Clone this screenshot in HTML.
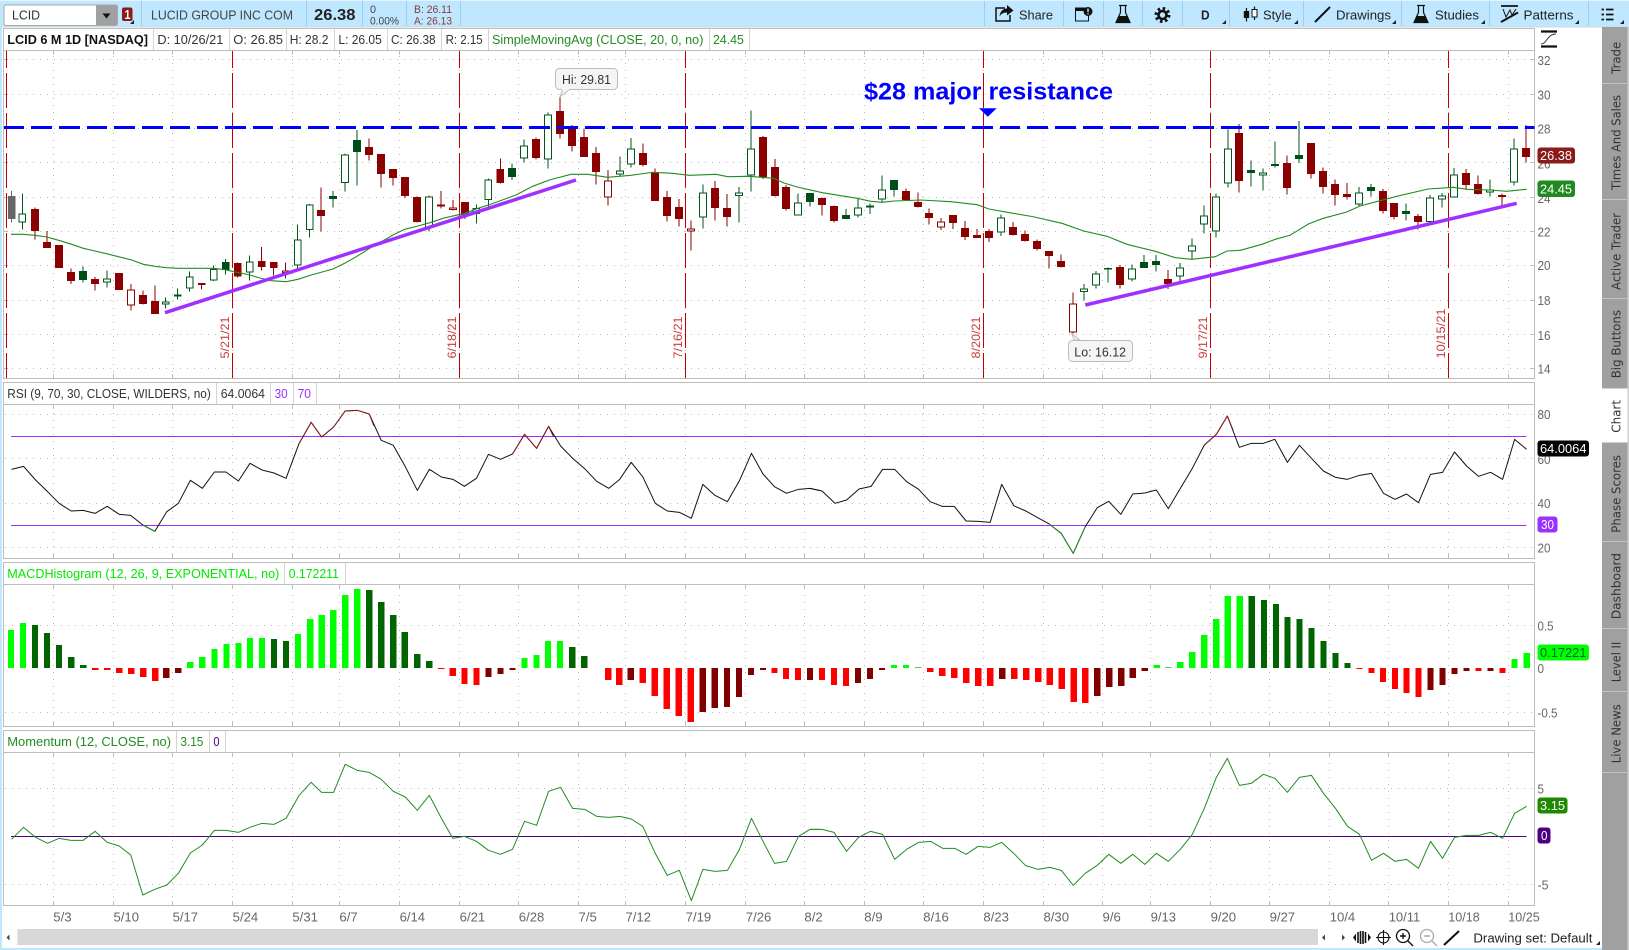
<!DOCTYPE html>
<html lang="en"><head><meta charset="utf-8"><title>LCID Chart</title>
<style>
html,body{margin:0;padding:0;background:#fff;overflow:hidden}
svg{display:block}
text{font-family:"Liberation Sans",sans-serif;font-size:13px;fill:#333}
.ax{fill:#666}
.sb{font-family:"DejaVu Sans",sans-serif;font-size:12px;fill:#333}
.wr{stroke:#8b0000;stroke-width:3;fill:none}
.wg{stroke:#00561b;stroke-width:3;fill:none}
.br{fill:#8b0000;stroke:#8b0000;stroke-width:3}
.bh{fill:#fff;stroke:#8b0000;stroke-width:3}
.bg{fill:#004d1a;stroke:#004d1a;stroke-width:3}
.bw{fill:#fff;stroke:#00561b;stroke-width:3}
.c{shape-rendering:crispEdges}
.ln{fill:none;vector-effect:non-scaling-stroke;stroke-width:1;stroke-linejoin:round}
</style></head><body>
<svg xmlns="http://www.w3.org/2000/svg" width="1629" height="950" viewBox="0 0 1629 950">
<defs>
<path id="vt" d="M53.5 0V950M113.5 0V950M172.5 0V950M232.5 0V950M292.5 0V950M339.5 0V950M399.5 0V950M459.5 0V950M518.5 0V950M578.5 0V950M625.5 0V950M685.5 0V950M745.5 0V950M804.5 0V950M864.5 0V950M923.5 0V950M983.5 0V950M1043.5 0V950M1102.5 0V950M1150.5 0V950M1210.5 0V950M1269.5 0V950M1329.5 0V950M1388.5 0V950M1448.5 0V950M1508.5 0V950"/>
<clipPath id="pg"><rect x="0" y="51" width="1629" height="327"/><rect x="0" y="405" width="1629" height="153"/><rect x="0" y="585" width="1629" height="141"/><rect x="0" y="753" width="1629" height="152"/></clipPath>
<clipPath id="st"><rect x="0" y="51" width="1629" height="4"/><rect x="0" y="374" width="1629" height="4"/><rect x="0" y="405" width="1629" height="4"/><rect x="0" y="554" width="1629" height="4"/><rect x="0" y="585" width="1629" height="4"/><rect x="0" y="722" width="1629" height="4"/><rect x="0" y="753" width="1629" height="4"/><rect x="0" y="901" width="1629" height="4"/></clipPath>
</defs>
<rect width="1629" height="950" fill="#fff"/>
<!-- outer strips -->
<rect x="0" y="27" width="2" height="923" fill="#bfe7ff"/>
<rect x="0" y="948" width="1602" height="2" fill="#bfe7ff"/>
<!-- toolbar -->
<rect width="1629" height="27" fill="#bfe7ff"/>
<rect width="1629" height="1" fill="#e4f5ff"/>
<rect x="0" y="26.5" width="1629" height="1" fill="#cfd8dd"/>
<g class="c" stroke="#9ecfea" stroke-width="1">
<path d="M141.5 1V26M306.5 1V26M362.5 1V26M406.5 1V26M460.5 1V26M984.5 1V26M1063.5 1V26M1103.5 1V26M1142.5 1V26M1182.5 1V26M1229.5 1V26M1303.5 1V26M1401.5 1V26M1489.5 1V26M1588.5 1V26"/>
</g>
<rect x="4" y="5" width="113.5" height="20.5" rx="2" fill="#fff" stroke="#a8a8a8"/>
<rect x="96" y="5.5" width="21" height="19.5" fill="#a0a0a0"/>
<path d="M102.5 13.5h8l-4 5z" fill="#111"/>
<text x="12" y="19.5" textLength="28" lengthAdjust="spacingAndGlyphs">LCID</text>
<rect x="122" y="7.5" width="10.5" height="13.5" rx="2" fill="#8b1a1a"/>
<text x="124.5" y="19" style="font-weight:bold;fill:#fff" textLength="6" lengthAdjust="spacingAndGlyphs">1</text>
<path d="M134 20v4h-4z" fill="#222"/>
<text x="151" y="19.5" style="fill:#444" textLength="142" lengthAdjust="spacingAndGlyphs">LUCID GROUP INC COM</text>
<text x="314" y="20" style="font-weight:bold;font-size:16px;fill:#222" textLength="41.5" lengthAdjust="spacingAndGlyphs">26.38</text>
<text x="370" y="13" style="font-size:11px;fill:#444" textLength="6" lengthAdjust="spacingAndGlyphs">0</text>
<text x="370" y="24.5" style="font-size:11px;fill:#444" textLength="29" lengthAdjust="spacingAndGlyphs">0.00%</text>
<text x="414" y="13" style="font-size:11px;fill:#8b3a3a" textLength="38" lengthAdjust="spacingAndGlyphs">B: 26.11</text>
<text x="414" y="24.5" style="font-size:11px;fill:#8b3a3a" textLength="38" lengthAdjust="spacingAndGlyphs">A: 26.13</text>
<!-- toolbar right -->
<path d="M1005 8H996V21H1010V15" fill="none" stroke="#111" stroke-width="1.5"/>
<path d="M1007 5L1013.5 10.5L1007 15.5V12.5C1003 12.5 1001 14 999.5 16.5C1000 11.5 1003 8.5 1007 8.5Z" fill="#111"/>
<text x="1019" y="19.5" style="fill:#222" textLength="34" lengthAdjust="spacingAndGlyphs">Share</text>
<rect x="1075.5" y="8" width="13" height="13" fill="none" stroke="#111"/><rect x="1075.5" y="8" width="10" height="3" fill="#111"/>
<circle cx="1088" cy="11.5" r="4.5" fill="#111"/><path d="M1088 8.5v3.6M1088 13.2v1.2" stroke="#fff" stroke-width="1.2"/>
<g id="fl"><path d="M1119 5.5h8M1120.5 6v6.5L1116 22.5h14L1125.5 12.5V6" fill="none" stroke="#111" stroke-width="1.2"/><path d="M1118.5 16h9l3 6.5h-15z" fill="#111"/></g>
<circle cx="1162.5" cy="15" r="4" fill="none" stroke="#111" stroke-width="2.6"/><circle cx="1162.5" cy="15" r="6.5" fill="none" stroke="#111" stroke-width="3" stroke-dasharray="2.5 2.6"/>
<text x="1201" y="19.5" style="font-weight:bold;fill:#222" textLength="8.6" lengthAdjust="spacingAndGlyphs">D</text>
<path d="M1226 20v4h-4zM1298 20v4h-4zM1396 20v4h-4zM1485 20v4h-4zM1579 20v4h-4zM1624 20v4h-4z" fill="#222"/>
<path d="M1246.5 8V21.5M1254.5 6.5V20" stroke="#111" stroke-width="1.2"/><rect x="1243.8" y="11" width="5.4" height="7" fill="#111"/><rect x="1252" y="9.5" width="5" height="7.5" fill="#fff" stroke="#111"/>
<text x="1263" y="19.5" style="fill:#222" textLength="28.6" lengthAdjust="spacingAndGlyphs">Style</text>
<path d="M1315 22L1330 7" stroke="#111" stroke-width="2"/>
<text x="1336" y="19.5" style="fill:#222" textLength="55" lengthAdjust="spacingAndGlyphs">Drawings</text>
<use href="#fl" x="298"/>
<text x="1435" y="19.5" style="fill:#222" textLength="44" lengthAdjust="spacingAndGlyphs">Studies</text>
<path d="M1501 6H1518" stroke="#111" stroke-width="1.8"/><path d="M1503 9L1506 17L1510 10L1512 15L1516 9" fill="none" stroke="#111"/><path d="M1501 22L1518 12.5" stroke="#111" stroke-width="2"/>
<text x="1523.5" y="19.5" style="fill:#222" textLength="50" lengthAdjust="spacingAndGlyphs">Patterns</text>
<path d="M1601.5 9.5h2.5M1606 9.5h7.5M1601.5 14.5h2.5M1606 14.5h7.5M1601.5 19.5h2.5M1606 19.5h7.5" stroke="#111" stroke-width="1.8"/>

<!-- panels -->
<g class="c" fill="none" stroke="#bdbdbd">
<rect x="3.5" y="28.5" width="1531" height="350"/><path d="M3.5 50.5H1534.5"/>
<rect x="3.5" y="382.5" width="1531" height="176"/><path d="M3.5 404.5H1534.5"/>
<rect x="3.5" y="562.5" width="1531" height="164"/><path d="M3.5 584.5H1534.5"/>
<rect x="3.5" y="730.5" width="1531" height="175"/><path d="M3.5 752.5H1534.5"/>
<path stroke="#d4d4d4" d="M153.5 29V50M229.5 29V50M286.5 29V50M334.5 29V50M387.5 29V50M441.5 29V50M488.5 29V50M709.5 29V50M749.5 29V50M216.5 383V404M270.5 383V404M293.5 383V404M316.5 383V404M284.5 563V584M345.5 563V584M176.5 731V752M209.5 731V752M225.5 731V752"/>
</g>
<!-- grid -->
<g class="c" fill="none">
<use href="#vt" stroke="#bbb" stroke-dasharray="1 6" clip-path="url(#pg)"/>
<use href="#vt" stroke="#bdbdbd" clip-path="url(#st)"/>
<path stroke="#bbb" stroke-dasharray="1 6" d="M5 59.5H1534M5 94.5H1534M5 128.5H1534M5 162.5H1534M5 197.5H1534M5 231.5H1534M5 265.5H1534M5 300.5H1534M5 334.5H1534M5 368.5H1534M5 414.5H1534M5 458.5H1534M5 503.5H1534M5 547.5H1534M5 625.5H1534M5 712.5H1534M5 788.5H1534M5 884.5H1534"/>
<path stroke="#bdbdbd" d="M4 59.5h4M4 94.5h4M4 128.5h4M4 162.5h4M4 197.5h4M4 231.5h4M4 265.5h4M4 300.5h4M4 334.5h4M4 368.5h4M1530 59.5h4M1530 94.5h4M1530 128.5h4M1530 162.5h4M1530 197.5h4M1530 231.5h4M1530 265.5h4M1530 300.5h4M1530 334.5h4M1530 368.5h4"/>
<!-- red verticals -->
<path stroke="#c00000" stroke-dasharray="35 5" stroke-dashoffset="18" d="M6.5 51V378M232.5 51V378M459.5 51V378M685.5 51V378M983.5 51V378M1210.5 51V378M1448.5 51V378"/>
</g>
<!-- rotated date labels -->
<g style="font-size:12px">
<text transform="translate(229,358.5) rotate(-90)" style="font-size:12px;fill:#c83c3c" textLength="42" lengthAdjust="spacingAndGlyphs">5/21/21</text>
<text transform="translate(456,358.5) rotate(-90)" style="font-size:12px;fill:#c83c3c" textLength="42" lengthAdjust="spacingAndGlyphs">6/18/21</text>
<text transform="translate(682,358.5) rotate(-90)" style="font-size:12px;fill:#c83c3c" textLength="42" lengthAdjust="spacingAndGlyphs">7/16/21</text>
<text transform="translate(980,358.5) rotate(-90)" style="font-size:12px;fill:#c83c3c" textLength="42" lengthAdjust="spacingAndGlyphs">8/20/21</text>
<text transform="translate(1207,358.5) rotate(-90)" style="font-size:12px;fill:#c83c3c" textLength="42" lengthAdjust="spacingAndGlyphs">9/17/21</text>
<text transform="translate(1445,358.5) rotate(-90)" style="font-size:12px;fill:#c83c3c" textLength="50" lengthAdjust="spacingAndGlyphs">10/15/21</text>
</g>

<!-- candles -->
<g class="c" transform="translate(0,100) scale(.33333)">
<path d="M35 273V368" stroke="#666" stroke-width="3"/><path d="M25 290h20V355h-20z" fill="#666" stroke="#666" stroke-width="3"/>
<path class="wr" d="M105 322V418M141 393V444M213 505V552M285 531V572M393 552V632M429 571V613M465 556V642M605 549V569M713 488V532"/>
<path class="wg" d="M67 280V388M249 500V548M321 511V563M497 592V626M533 565V598M569 514V575M641 497V543M677 477V524M749 466V542"/>
<path class="br" d="M95 329h20V391h-20zM131 428h20V442h-20zM167 437h20V502h-20zM203 518h20V541h-20zM275 539h20V550h-20zM347 521h20V568h-20zM419 587h20V610h-20zM455 605h20V640h-20zM595 550h20V554h-20zM703 491h20V528h-20z"/>
<path class="bh" d="M383 570h20V615h-20z"/>
<path class="bg" d="M239 515h20V538h-20zM667 488h20V508h-20z"/>
<path class="bw" d="M57 342h20V366h-20zM311 537h20V546h-20zM487 606h20V612h-20zM523 585h20V588h-20zM559 531h20V564h-20zM631 509h20V540h-20zM739 486h20V516h-20z"/>
</g>
<g class="c" transform="translate(258,100) scale(.33333)">
<path class="wr" d="M11 441V512M47 486V527M83 487V535M189 262V395M333 115V181M369 162V263M405 207V257M441 231V294M477 290V368M549 273V326M585 300V332M621 306V357M727 175V250"/>
<path class="wg" d="M119 373V507M155 312V413M225 273V322M261 160V275M297 90V257M513 286V395M655 313V371M691 235V320M762 190V240"/>
<path class="br" d="M1 485h20V499h-20zM37 488h20V502h-20zM179 332h20V346h-20zM323 143h20V163h-20zM359 164h20V220h-20zM395 209h20V232h-20zM431 233h20V286h-20zM467 293h20V364h-20zM611 308h20V343h-20zM717 209h20V247h-20z"/>
<path class="bh" d="M73 513h20V518h-20zM539 315h20V318h-20zM575 324h20V329h-20z"/>
<path class="bg" d="M215 290h20V295h-20zM287 122h20V154h-20zM752 206h20V229h-20z"/>
<path class="bw" d="M109 420h20V495h-20zM145 315h20V389h-20zM251 165h20V248h-20zM503 291h20V383h-20zM645 325h20V341h-20zM681 240h20V299h-20z"/>
</g>
<g class="c" transform="translate(516,100) scale(.33333)">
<path class="wr" d="M60 113V178M132 -9V115M168 75V155M204 85V171M240 141V254M276 210V317M381 130V200M417 205V303M453 273V365M489 297V380M525 361V452M597 243V362M633 282V380M741 108V237"/>
<path class="wg" d="M24 118V188M96 38V206M312 169V228M345 114V203M561 253V385M669 261V368M705 31V275"/>
<path class="br" d="M50 119h20V172h-20zM122 35h20V100h-20zM158 89h20V136h-20zM194 113h20V169h-20zM230 161h20V214h-20zM371 161h20V193h-20zM407 221h20V301h-20zM443 293h20V346h-20zM479 323h20V355h-20zM587 266h20V322h-20zM623 326h20V349h-20zM731 113h20V229h-20z"/>
<path class="bh" d="M266 243h20V291h-20zM515 387h20V393h-20z"/>
<path class="bw" d="M14 138h20V174h-20zM86 45h20V177h-20zM302 213h20V222h-20zM335 147h20V192h-20zM551 279h20V351h-20zM659 279h20V287h-20zM695 147h20V225h-20z"/>
</g>
<g class="c" transform="translate(774,100) scale(.33333)">
<path class="wr" d="M3 177V290M36 255V332M144 293V347M180 316V368M396 265V303M432 277V323M465 325V374M501 354V390M537 345V387M573 363V420M609 387V414M645 387V426M717 366V407M753 391V425"/>
<path class="wg" d="M72 280V347M108 279V320M216 327V357M252 295V352M288 311V342M324 226V307M360 240V290M681 343V408"/>
<path class="br" d="M-7 203h20V286h-20zM26 263h20V325h-20zM134 296h20V313h-20zM170 320h20V361h-20zM386 275h20V298h-20zM422 308h20V319h-20zM455 341h20V352h-20zM527 347h20V367h-20zM563 386h20V409h-20zM599 407h20V412h-20zM635 395h20V412h-20zM707 383h20V403h-20zM743 404h20V421h-20z"/>
<path class="bh" d="M491 366h20V381h-20z"/>
<path class="bg" d="M98 281h20V304h-20zM206 347h20V355h-20zM350 242h20V268h-20z"/>
<path class="bw" d="M62 309h20V345h-20zM242 324h20V345h-20zM278 318h20V321h-20zM314 270h20V297h-20zM671 354h20V396h-20z"/>
</g>
<g class="c" transform="translate(1032,100) scale(.33333)">
<path class="wr" d="M15 418V452M51 453V506M87 463V503M123 577V700M264 495V566M408 510V567M621 72V278M765 166V284"/>
<path class="wg" d="M156 552V601M192 513V565M228 503V548M300 493V545M336 465V504M372 465V515M444 489V545M480 415V478M516 316V401M552 280V413M588 88V263M657 181V260M693 205V272M729 124V203"/>
<path class="br" d="M5 425h20V445h-20zM41 455h20V466h-20zM77 485h20V499h-20zM254 503h20V553h-20zM398 539h20V550h-20zM611 101h20V241h-20zM755 191h20V262h-20z"/>
<path class="bh" d="M113 612h20V696h-20z"/>
<path class="bg" d="M326 488h20V502h-20zM362 485h20V493h-20zM647 212h20V217h-20zM719 194h20V196h-20z"/>
<path class="bw" d="M146 567h20V575h-20zM182 522h20V555h-20zM218 505h20V507h-20zM290 507h20V537h-20zM434 504h20V528h-20zM470 438h20V453h-20zM506 348h20V372h-20zM542 291h20V393h-20zM578 147h20V249h-20zM683 219h20V225h-20z"/>
</g>
<g class="c" transform="translate(1290,100) scale(.33333)">
<path class="wr" d="M63 129V236M99 202V280M135 238V317M171 249V299M279 267V341M312 309V359M384 342V388M528 207V267M564 226V284M636 280V318M708 75V188"/>
<path class="wg" d="M27 63V189M207 261V320M243 252V290M348 310V362M420 285V369M456 279V323M492 204V293M600 238V290M672 115V257"/>
<path class="br" d="M53 131h20V220h-20zM89 215h20V259h-20zM125 254h20V283h-20zM161 284h20V289h-20zM269 275h20V331h-20zM302 311h20V349h-20zM374 350h20V364h-20zM518 221h20V253h-20zM554 254h20V280h-20zM626 287h20V289h-20zM698 146h20V169h-20z"/>
<path class="bg" d="M17 167h20V175h-20zM233 263h20V271h-20zM338 335h20V340h-20z"/>
<path class="bw" d="M197 279h20V312h-20zM410 294h20V365h-20zM446 288h20V297h-20zM482 225h20V291h-20zM590 270h20V276h-20zM662 147h20V246h-20z"/>
</g>

<!-- SMA -->
<polyline fill="none" stroke="#228b22" stroke-width="1.1" points="11,234.3 23.3,234.3 35,235.3 46.7,237 60,240.7 71.7,244.3 83.3,248.3 95,251 106.7,253.7 118.3,256.7 131.7,260 143.3,264.3 155,266.3 166.7,267.7 178.3,268.3 213.3,268.3 225,269.7 236.7,272.3 250,275 258,277.5 271.3,280.7 286.3,281.7 298,279.3 311.3,275 333,269 344.7,263.3 356.3,256.7 368,249.3 381.3,241.7 393,235 404.7,229.3 418,226 431.3,222.3 443,218.3 464.7,213.3 478,208.3 491.3,204 516,195 532.7,186.3 549.3,180 571,174.3 587.7,174.3 607.7,177.3 631,175.3 652.7,172.3 672.7,173.3 689.3,175.3 716,174.3 727.7,176.7 749.3,176.3 774,178.3 784,183 797.3,187 822.3,192.7 857.3,198.3 870.7,201.3 882.3,202.3 894,201 920.7,200 950.7,201.7 977.3,204.7 989,209 1007.3,212.3 1032,216.5 1062,223.3 1083.7,231 1107,236.3 1127,244.3 1155.3,251.3 1175.3,257.7 1192,259.3 1215.3,256.7 1227,251 1240.3,250.3 1262,244.3 1275.3,239.3 1290,235.3 1308.3,224 1323.3,218.3 1346.7,212 1360,206 1396.7,196.3 1428.3,189 1453.3,187.3 1466.7,189.3 1490,190 1506.7,191.3 1526.7,189.3"/>
<!-- purple trend -->
<path d="M165 312.7L576 180M1085.3 305L1516.7 203.3" stroke="#a030ff" stroke-width="3.5" fill="none"/>
<!-- blue dashed -->
<path class="c" d="M4 127.5H1534.5" stroke="#0000ff" stroke-width="3" stroke-dasharray="20 7 21 7 21 7" />
<path d="M979 108.3H996.7L987.8 116.7Z" fill="#0000ff"/>
<text x="864" y="99.5" style="font-weight:bold;font-size:24px;fill:#0000ff" textLength="249" lengthAdjust="spacingAndGlyphs">$28 major resistance</text>
<!-- callouts -->
<path d="M563 89L560 97L570 89" fill="#f5f5f5" stroke="#bbb"/>
<rect x="555.5" y="68.5" width="62" height="21" rx="4" fill="#f5f5f5" stroke="#bbb"/>
<rect x="562" y="87" width="7" height="3" fill="#f5f5f5"/>
<text x="562" y="84" textLength="49" lengthAdjust="spacingAndGlyphs">Hi: 29.81</text>
<path d="M1072 334L1080 340H1074Z" fill="#f5f5f5" stroke="#bbb"/>
<rect x="1068.5" y="340.5" width="64" height="21" rx="4" fill="#f5f5f5" stroke="#bbb"/>
<text x="1074.3" y="356.5" textLength="51.7" lengthAdjust="spacingAndGlyphs">Lo: 16.12</text>

<!-- RSI -->
<path class="c" d="M11 436.5H1526.5M11 525.5H1526.5" stroke="#9b30ff" fill="none"/>
<g transform="translate(0,240) scale(.52296,.33333)">
<polyline class="ln" stroke="#111" points="22,688 45,679 68,720 91,755 113,790 136,813 159,811 182,820 205,799 228,823 250,826 273,855 296,874 319,815 341,790 364,721 387,745 410,696 432,696 456,723 478,670 501,690 524,699 547,715 572,610 595,547 615,591 638,561 660,513 683,511 706,522 729,601 752,616 775,680 798,751 821,688 844,711 866,718 888,739 911,715 934,643 957,658 980,642 1003,583 1026,625 1049,559 1072,618 1095,655 1118,686 1141,724 1164,745 1185,718 1207,667 1229,710 1253,790 1276,813 1299,817 1322,835 1344,733 1367,766 1391,785 1414,722 1437,640 1459,702 1481,740 1504,760 1527,748 1549,745 1568,752"/>
<polyline class="ln" stroke="#8b1a1a" points="572,610 595,547 615,591 638,561 660,513 683,511 706,522 715,558"/>
<polyline class="ln" stroke="#8b1a1a" points="980,642 1003,583 1026,625 1049,559 1058,589"/>
<polyline class="ln" stroke="#228b22" points="273,855 296,874"/>
</g>
<g transform="translate(810,240) scale(.52232,.33333)">
<polyline class="ln" stroke="#111" points="0,745 23,753 48,790 70,780 94,747 117,739 139,688 162,688 185,725 208,748 230,785 253,799 276,799 299,843 322,844 345,847 367,733 390,797 413,813 436,833 458,852 481,880 504,940 527,860 550,803 572,784 595,823 618,762 641,759 663,750 686,806 709,745 732,685 755,615 778,583 799,528 822,622 845,610 868,610 890,598 914,667 937,616 960,655 983,693 1006,712 1029,718 1052,706 1075,700 1098,760 1120,778 1142,762 1165,788 1188,703 1211,697 1234,636 1257,678 1280,709 1303,697 1326,718 1349,598 1372,628"/>
<polyline class="ln" stroke="#8b1a1a" points="755,615 778,583 799,528 810,570"/>
<polyline class="ln" stroke="#228b22" points="458,852 481,880 504,940 527,860"/>
</g>

<!-- MACD bars -->
<g class="c" fill="none" stroke-width="12" transform="translate(0,560) scale(.52296,.33333)">
<path stroke="#00ff00" d="M21 324V210M44 324V189M364 324V306M387 324V291M410 324V267M433 324V252M456 324V249M478 324V234M501 324V234M570 324V222M593 324V177M615 324V165M637 324V150M660 324V105M683 324V87M1003 324V294M1026 324V285M1048 324V243M1071 324V243"/>
<path stroke="#006400" d="M67 324V195M90 324V219M113 324V255M136 324V291M159 324V315M524 324V237M547 324V243M706 324V90M729 324V126M752 324V165M774 324V216M798 324V282M821 324V303M1094 324V261M1117 324V288"/>
<path stroke="#ff0000" d="M182 324V330M205 324V330M228 324V339M251 324V342M274 324V351M297 324V363M844 324V327M866 324V348M888 324V372M911 324V375M1163 324V360M1184 324V375M1229 324V369M1252 324V408M1275 324V447M1298 324V468M1321 324V486M1481 324V339M1503 324V357M1526 324V360"/>
<path stroke="#800000" d="M318 324V354M341 324V339M934 324V351M957 324V342M980 324V330M1206 324V360M1344 324V456M1367 324V444M1390 324V441M1413 324V411M1436 324V345M1459 324V330M1549 324V360"/>
</g>
<g class="c" fill="none" stroke-width="12" transform="translate(810,560) scale(.52232,.33333)">
<path stroke="#00ff00" d="M161 324V315M184 324V315M664 324V315M709 324V306M732 324V276M755 324V225M778 324V177M800 324V108M823 324V108M1349 324V297M1372 324V279"/>
<path stroke="#006400" d="M207 324V322M686 324V322M846 324V108M869 324V120M892 324V132M914 324V171M937 324V177M960 324V204M983 324V243M1006 324V279M1029 324V309"/>
<path stroke="#ff0000" d="M23 324V360M46 324V375M69 324V378M230 324V336M253 324V348M276 324V354M299 324V369M322 324V378M345 324V378M391 324V357M414 324V360M437 324V366M459 324V375M482 324V387M505 324V426M527 324V429M1052 324V327M1075 324V339M1097 324V366M1120 324V387M1142 324V399M1165 324V411M1280 324V333M1326 324V339"/>
<path stroke="#800000" d="M92 324V369M115 324V357M138 324V330M368 324V357M550 324V408M573 324V381M596 324V378M618 324V354M641 324V333M1188 324V390M1211 324V375M1234 324V342M1257 324V333M1303 324V333"/>
</g>

<!-- Momentum -->
<path class="c" d="M11 836.5H1526.5" stroke="#4b0082" fill="none"/>
<g transform="translate(0,560) scale(.52296,.33333)">
<polyline class="ln" stroke="#228b22" points="22,838 45,802 68,832 91,850 113,835 136,841 159,841 182,814 205,847 228,858 250,885 273,1005 296,988 319,975 341,940 364,879 387,855 410,811 432,811 456,817 478,802 501,790 524,793 547,775 572,706 595,667 615,697 638,697 660,613 683,631 706,637 729,658 752,694 775,711 798,751 821,706 844,775 866,835 888,829 911,844 934,871 957,883 980,868 1003,784 1026,796 1049,694 1072,682 1095,745 1118,748 1141,769 1164,772 1185,769 1207,777 1229,799 1253,880 1276,946 1299,931 1322,1022 1344,928 1367,934 1391,931 1414,868 1437,775 1459,844 1481,910 1504,904 1527,829 1549,808 1568,808"/>
</g>
<g transform="translate(810,560) scale(.52232,.33333)">
<polyline class="ln" stroke="#228b22" points="0,808 23,808 46,817 70,874 93,832 116,814 139,823 162,898 185,868 208,847 231,844 254,865 277,865 299,883 322,859 345,862 367,847 390,880 413,917 436,928 459,922 481,931 504,976 527,940 550,916 572,883 595,910 618,883 641,913 663,880 686,904 709,868 732,823 755,745 778,652 799,595 822,676 845,670 868,643 890,655 914,697 937,652 960,646 983,700 1006,745 1029,799 1052,823 1075,901 1098,880 1120,904 1142,898 1165,925 1188,844 1211,895 1234,832 1257,826 1280,826 1303,817 1326,835 1349,760 1372,739"/>
</g>

<!-- Header texts -->
<text x="7.3" y="44" style="font-weight:bold;fill:#111" textLength="140.7" lengthAdjust="spacingAndGlyphs">LCID 6 M 1D [NASDAQ]</text>
<text x="157.4" y="44" textLength="65.9" lengthAdjust="spacingAndGlyphs">D: 10/26/21</text>
<text x="233.2" y="44" textLength="49.8" lengthAdjust="spacingAndGlyphs">O: 26.85</text>
<text x="289.7" y="44" textLength="38.7" lengthAdjust="spacingAndGlyphs">H: 28.2</text>
<text x="338.4" y="44" textLength="43.4" lengthAdjust="spacingAndGlyphs">L: 26.05</text>
<text x="391" y="44" textLength="44.6" lengthAdjust="spacingAndGlyphs">C: 26.38</text>
<text x="445.6" y="44" textLength="37.1" lengthAdjust="spacingAndGlyphs">R: 2.15</text>
<text x="492" y="44" style="fill:#228b22" textLength="211.4" lengthAdjust="spacingAndGlyphs">SimpleMovingAvg (CLOSE, 20, 0, no)</text>
<text x="713" y="44" style="fill:#228b22" textLength="30.9" lengthAdjust="spacingAndGlyphs">24.45</text>

<text x="7.3" y="398" textLength="203.5" lengthAdjust="spacingAndGlyphs">RSI (9, 70, 30, CLOSE, WILDERS, no)</text>
<text x="220.7" y="398" textLength="44.3" lengthAdjust="spacingAndGlyphs">64.0064</text>
<text x="274.6" y="398" style="fill:#9b30ff" textLength="13" lengthAdjust="spacingAndGlyphs">30</text>
<text x="297.6" y="398" style="fill:#9b30ff" textLength="13.4" lengthAdjust="spacingAndGlyphs">70</text>

<text x="7.3" y="578" style="fill:#00e800" textLength="272" lengthAdjust="spacingAndGlyphs">MACDHistogram (12, 26, 9, EXPONENTIAL, no)</text>
<text x="288.7" y="578" style="fill:#00e800" textLength="50.2" lengthAdjust="spacingAndGlyphs">0.172211</text>

<text x="7.3" y="746" style="fill:#228b22" textLength="163.7" lengthAdjust="spacingAndGlyphs">Momentum (12, CLOSE, no)</text>
<text x="180.4" y="746" style="fill:#228b22" textLength="23" lengthAdjust="spacingAndGlyphs">3.15</text>
<text x="213.4" y="746" style="fill:#4b0082" textLength="6.2" lengthAdjust="spacingAndGlyphs">0</text>

<!-- Price axis -->
<g transform="translate(0,-1)">
<text class="ax" x="1537.5" y="66" textLength="13" lengthAdjust="spacingAndGlyphs">32</text>
<text class="ax" x="1537.5" y="100.5" textLength="13" lengthAdjust="spacingAndGlyphs">30</text>
<text class="ax" x="1537.5" y="134.5" textLength="13" lengthAdjust="spacingAndGlyphs">28</text>
<text class="ax" x="1537.5" y="169.5" textLength="13" lengthAdjust="spacingAndGlyphs">26</text>
<text class="ax" x="1537.5" y="204" textLength="13" lengthAdjust="spacingAndGlyphs">24</text>
<text class="ax" x="1537.5" y="237.5" textLength="13" lengthAdjust="spacingAndGlyphs">22</text>
<text class="ax" x="1537.5" y="271" textLength="13" lengthAdjust="spacingAndGlyphs">20</text>
<text class="ax" x="1537.5" y="306" textLength="13" lengthAdjust="spacingAndGlyphs">18</text>
<text class="ax" x="1537.5" y="341" textLength="13" lengthAdjust="spacingAndGlyphs">16</text>
<text class="ax" x="1537.5" y="374.5" textLength="13" lengthAdjust="spacingAndGlyphs">14</text>
<text class="ax" x="1537.5" y="420" textLength="13" lengthAdjust="spacingAndGlyphs">80</text>
<text class="ax" x="1537.5" y="465" textLength="13" lengthAdjust="spacingAndGlyphs">60</text>
<text class="ax" x="1537.5" y="509" textLength="13" lengthAdjust="spacingAndGlyphs">40</text>
<text class="ax" x="1537.5" y="553.5" textLength="13" lengthAdjust="spacingAndGlyphs">20</text>
<text class="ax" x="1537.5" y="631.5" textLength="16" lengthAdjust="spacingAndGlyphs">0.5</text>
<text class="ax" x="1537.5" y="674" textLength="6.5" lengthAdjust="spacingAndGlyphs">0</text>
<text class="ax" x="1537.5" y="718.5" textLength="20" lengthAdjust="spacingAndGlyphs">-0.5</text>
<text class="ax" x="1537.5" y="794.5" textLength="6.5" lengthAdjust="spacingAndGlyphs">5</text>
<text class="ax" x="1537.5" y="890.5" textLength="11" lengthAdjust="spacingAndGlyphs">-5</text>
</g>
<!-- badges -->
<rect x="1537.5" y="147.5" width="37.5" height="16" rx="3" fill="#8b1a1a"/>
<text x="1540" y="160" style="fill:#fff" textLength="32" lengthAdjust="spacingAndGlyphs">26.38</text>
<rect x="1537.5" y="180.5" width="37.5" height="16.5" rx="3" fill="#1f8a1f"/>
<text x="1540" y="193.5" style="fill:#fff" textLength="32" lengthAdjust="spacingAndGlyphs">24.45</text>
<rect x="1537.5" y="440.5" width="51.5" height="16" rx="3" fill="#000"/>
<text x="1540" y="453" style="fill:#fff" textLength="46.5" lengthAdjust="spacingAndGlyphs">64.0064</text>
<rect x="1537.5" y="516.5" width="20" height="16" rx="3" fill="#9b30ff"/>
<text x="1541" y="529" style="fill:#fff" textLength="13" lengthAdjust="spacingAndGlyphs">30</text>
<rect x="1537.5" y="644.5" width="51.5" height="16" rx="3" fill="#00ff00"/>
<text x="1540" y="657" style="fill:#063" textLength="46.5" lengthAdjust="spacingAndGlyphs">0.17221</text>
<rect x="1537.5" y="797.5" width="30" height="16" rx="3" fill="#1f8a00"/>
<text x="1540" y="810" style="fill:#fff" textLength="25" lengthAdjust="spacingAndGlyphs">3.15</text>
<rect x="1537.5" y="827.5" width="13" height="16" rx="3" fill="#4b0082"/>
<text x="1541" y="840" style="fill:#fff" textLength="6.5" lengthAdjust="spacingAndGlyphs">0</text>
<!-- top right S icon -->
<path d="M1541 31.5H1557M1541 46.5H1557" stroke="#111" stroke-width="2.2"/>
<path d="M1541 44C1547 44 1547 34 1556 34" fill="none" stroke="#333"/>

<!-- time axis -->
<g>
<text class="ax" x="53.3" y="921.5" textLength="18.3" lengthAdjust="spacingAndGlyphs">5/3</text>
<text class="ax" x="113.5" y="921.5" textLength="25.5" lengthAdjust="spacingAndGlyphs">5/10</text>
<text class="ax" x="172.6" y="921.5" textLength="25.5" lengthAdjust="spacingAndGlyphs">5/17</text>
<text class="ax" x="232.7" y="921.5" textLength="25.5" lengthAdjust="spacingAndGlyphs">5/24</text>
<text class="ax" x="292.4" y="921.5" textLength="25.5" lengthAdjust="spacingAndGlyphs">5/31</text>
<text class="ax" x="339.4" y="921.5" textLength="18.3" lengthAdjust="spacingAndGlyphs">6/7</text>
<text class="ax" x="399.6" y="921.5" textLength="25.5" lengthAdjust="spacingAndGlyphs">6/14</text>
<text class="ax" x="459.7" y="921.5" textLength="25.5" lengthAdjust="spacingAndGlyphs">6/21</text>
<text class="ax" x="518.8" y="921.5" textLength="25.5" lengthAdjust="spacingAndGlyphs">6/28</text>
<text class="ax" x="578.5" y="921.5" textLength="18.3" lengthAdjust="spacingAndGlyphs">7/5</text>
<text class="ax" x="625.5" y="921.5" textLength="25.5" lengthAdjust="spacingAndGlyphs">7/12</text>
<text class="ax" x="685.7" y="921.5" textLength="25.5" lengthAdjust="spacingAndGlyphs">7/19</text>
<text class="ax" x="745.8" y="921.5" textLength="25.5" lengthAdjust="spacingAndGlyphs">7/26</text>
<text class="ax" x="804.4" y="921.5" textLength="18.3" lengthAdjust="spacingAndGlyphs">8/2</text>
<text class="ax" x="864.3" y="921.5" textLength="18.3" lengthAdjust="spacingAndGlyphs">8/9</text>
<text class="ax" x="923.3" y="921.5" textLength="25.5" lengthAdjust="spacingAndGlyphs">8/16</text>
<text class="ax" x="983.4" y="921.5" textLength="25.5" lengthAdjust="spacingAndGlyphs">8/23</text>
<text class="ax" x="1043.5" y="921.5" textLength="25.5" lengthAdjust="spacingAndGlyphs">8/30</text>
<text class="ax" x="1102.5" y="921.5" textLength="18.3" lengthAdjust="spacingAndGlyphs">9/6</text>
<text class="ax" x="1150.6" y="921.5" textLength="25.5" lengthAdjust="spacingAndGlyphs">9/13</text>
<text class="ax" x="1210.6" y="921.5" textLength="25.5" lengthAdjust="spacingAndGlyphs">9/20</text>
<text class="ax" x="1269.6" y="921.5" textLength="25.5" lengthAdjust="spacingAndGlyphs">9/27</text>
<text class="ax" x="1329.7" y="921.5" textLength="25.5" lengthAdjust="spacingAndGlyphs">10/4</text>
<text class="ax" x="1388.7" y="921.5" textLength="31.5" lengthAdjust="spacingAndGlyphs">10/11</text>
<text class="ax" x="1448.3" y="921.5" textLength="31.5" lengthAdjust="spacingAndGlyphs">10/18</text>
<text class="ax" x="1508.3" y="921.5" textLength="31.5" lengthAdjust="spacingAndGlyphs">10/25</text>
</g>
<!-- scrollbar -->
<rect x="17.3" y="929" width="1300.7" height="16" fill="#d8d8d8"/>
<path d="M9.5 934.5v6l-3-3zM1325 934.5v6l-3-3zM1342 934.5v6l3-3z" fill="#444"/>
<path d="M1356 933.5l-3 4 3 4zM1368 933.5l3 4-3 4z" fill="#111"/><path d="M1358 932v11M1360.5 931v13M1363 931v13M1365.5 932v11" stroke="#111" stroke-width="1.6"/>
<circle cx="1383.5" cy="937.5" r="5.5" fill="none" stroke="#111" stroke-width="1.1"/><path d="M1383.5 930V945M1376 937.5H1391" stroke="#111" stroke-width="1.1"/>
<circle cx="1403" cy="936" r="6.5" fill="none" stroke="#111" stroke-width="1.3"/><path d="M1408 941L1413 946M1400 936h6M1403 933v6" stroke="#111" stroke-width="1.4"/>
<circle cx="1427" cy="936" r="6.5" fill="none" stroke="#aaa" stroke-width="1.3"/><path d="M1432 941L1437 946M1424 936h6" stroke="#aaa" stroke-width="1.4"/>
<path d="M1444 945L1459 931" stroke="#111" stroke-width="2"/>
<text x="1473.4" y="942.5" style="fill:#222" textLength="119" lengthAdjust="spacingAndGlyphs">Drawing set: Default</text>
<path d="M1600 941v4h-4z" fill="#222"/>

<!-- sidebar -->
<rect x="1602" y="27" width="27" height="923" fill="#a0a0a0"/>
<rect x="1627.5" y="27" width="1.5" height="923" fill="#cfcfcf"/>
<rect x="1602" y="388.5" width="25.5" height="54" fill="#fff"/>
<path class="c" d="M1602 83.5H1627M1602 199.5H1627M1602 298.5H1627M1602 541.5H1627M1602 628.5H1627M1602 691.5H1627M1602 772.5H1627" stroke="#c4c4c4"/>
<text class="sb" transform="translate(1620.5,74) rotate(-90)" textLength="32.3" lengthAdjust="spacingAndGlyphs">Trade</text>
<text class="sb" transform="translate(1620.5,190) rotate(-90)" textLength="95" lengthAdjust="spacingAndGlyphs">Times And Sales</text>
<text class="sb" transform="translate(1620.5,290) rotate(-90)" textLength="77" lengthAdjust="spacingAndGlyphs">Active Trader</text>
<text class="sb" transform="translate(1620.5,378.3) rotate(-90)" textLength="68.3" lengthAdjust="spacingAndGlyphs">Big Buttons</text>
<text class="sb" transform="translate(1620.5,432.7) rotate(-90)" textLength="32.7" lengthAdjust="spacingAndGlyphs">Chart</text>
<text class="sb" transform="translate(1620.5,532.7) rotate(-90)" textLength="77.7" lengthAdjust="spacingAndGlyphs">Phase Scores</text>
<text class="sb" transform="translate(1620.5,619.3) rotate(-90)" textLength="66.3" lengthAdjust="spacingAndGlyphs">Dashboard</text>
<text class="sb" transform="translate(1620.5,682.3) rotate(-90)" textLength="40.6" lengthAdjust="spacingAndGlyphs">Level II</text>
<text class="sb" transform="translate(1620.5,763.3) rotate(-90)" textLength="59" lengthAdjust="spacingAndGlyphs">Live News</text>
</svg>
</body></html>
